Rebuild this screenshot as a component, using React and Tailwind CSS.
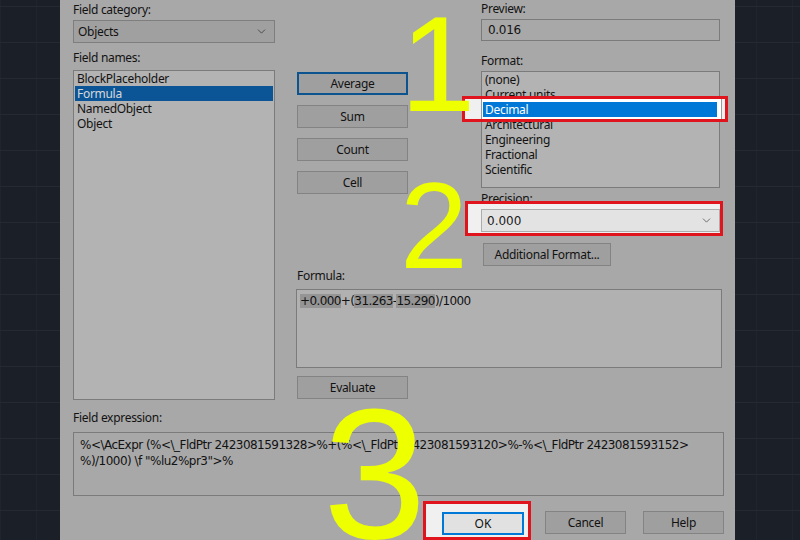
import { ChevronDown } from 'lucide-react';

const fieldNames = ['BlockPlaceholder', 'Formula', 'NamedObject', 'Object'];
const formats = ['(none)', 'Current units', 'Decimal', 'Architectural', 'Engineering', 'Fractional', 'Scientific'];

function Label({ children, className = '' }) {
  return <div className={`h-[14px] leading-[14px] text-[12px] text-[#121212] ${className}`}>{children}</div>;
}

function Button({ children, className = '', focused = false }) {
  return (
    <div
      className={`h-[23px] flex items-center justify-center text-[12px] text-[#121212] bg-[#9f9f9f] border ${
        focused ? 'border-[#0b5490] border-2' : 'border-[#838383]'
      } ${className}`}
    >
      {children}
    </div>
  );
}

function Combo({ value, className = '' }) {
  return (
    <div className={`h-[23px] flex items-center justify-between pl-[4px] pr-[6px] bg-[#a0a0a0] border border-[#7e7e7e] text-[12px] text-[#121212] ${className}`}>
      <span>{value}</span>
      <ChevronDown size={13} strokeWidth={1.5} className="text-[#3a3a3a]" />
    </div>
  );
}

function ListBox({ items, selected, className = '' }) {
  return (
    <div className={`bg-[#b3b3b3] border border-[#7b7b7b] px-[1px] ${className}`}>
      {items.map((item) => (
        <div
          key={item}
          className={`h-[15px] leading-[15px] pl-[2px] text-[12px] ${
            item === selected ? 'bg-[#0b5597] text-[#d8d8d8]' : 'text-[#121212]'
          }`}
        >
          {item}
        </div>
      ))}
    </div>
  );
}

function Dialog() {
  return (
    <div className="w-[675px] h-full shrink-0 bg-[#a8a8a8] pl-[13px] font-['Noto_Sans',sans-serif] tracking-[-0.3px]">
      <div className="flex">
        {/* left column: category + field names */}
        <div className="w-[202px] shrink-0">
          <Label className="mt-[3px]">Field category:</Label>
          <Combo value="Objects" className="mt-[3px]" />
          <Label className="mt-[8px]">Field names:</Label>
          <ListBox items={fieldNames} selected="Formula" className="mt-[5px] h-[330px]" />
        </div>

        <div className="ml-[21px] w-[428px] shrink-0">
          <div className="flex">
            <div className="w-[111px] ml-[1px] pt-[72px] flex flex-col gap-[10px]">
              <Button focused>Average</Button>
              <Button>Sum</Button>
              <Button>Count</Button>
              <Button>Cell</Button>
            </div>

            <div className="ml-[73px] w-[239px]">
              <Label className="mt-[2px]">Preview:</Label>
              <div className="mt-[3px] h-[22px] flex items-center pl-[6px] bg-[#a8a8a8] border border-[#7b7b7b] text-[12px] text-[#121212] font-['DejaVu_Sans',sans-serif]">
                0.016
              </div>
              <Label className="mt-[13px]">Format:</Label>
              <ListBox items={formats} className="mt-[3px] h-[117px]" />
              <Label className="mt-[4px]">Precision:</Label>
              <Combo value="0.000" className="mt-[3px]" />
              <Button className="mt-[11px] ml-[2px] w-[128px]">Additional Format...</Button>
            </div>
          </div>

          <Label className="mt-[3px] ml-[1px]">Formula:</Label>
          <div className="mt-[6px] h-[79px] w-[426px] bg-[#b1b1b1] border border-[#7b7b7b] pl-[3px] pt-[3px] text-[12px] leading-[16px] text-[#121212] font-['DejaVu_Sans',sans-serif] tracking-[-0.6px]">
            <span className="bg-[#959595]">+0.000</span>+(<span className="bg-[#959595]">31.263</span>-
            <span className="bg-[#959595]">15.290</span>)/1000
          </div>
          <Button className="mt-[8px] ml-[1px] w-[111px]">Evaluate</Button>
        </div>
      </div>

      <Label className="mt-[11px]">Field expression:</Label>
      <div className="mt-[7px] h-[64px] w-[651px] bg-[#a8a8a8] border border-[#7b7b7b] pl-[6px] pt-[4px] text-[12px] leading-[16px] text-[#121212] font-['DejaVu_Sans',sans-serif] tracking-[-0.52px] whitespace-pre">
        {'%<\\AcExpr (%<\\_FldPtr 2423081591328>%+(%<\\_FldPtr 2423081593120>%-%<\\_FldPtr 2423081593152>'}
        <br />
        {'%)/1000) \\f "%lu2%pr3">%'}
      </div>

      <div className="mt-[15px] flex">
        <Button className="ml-[370px] w-[81px]">OK</Button>
        <Button className="ml-[21px] w-[81px]">Cancel</Button>
        <Button className="ml-[17px] w-[81px]">Help</Button>
      </div>
    </div>
  );
}

export default function App() {
  return (
    <div className="relative w-[800px] h-[540px] overflow-hidden flex bg-[#1b1f27] bg-[linear-gradient(#242932_1px,transparent_1px),linear-gradient(90deg,#20242c_1px,transparent_1px)] bg-size-[36px_36px] bg-position-[0_6px]">
      <div className="w-[60px] shrink-0" />
      <Dialog />

      {/* callout 1: Decimal format */}
      <div className="absolute left-[462px] top-[96px] w-[266px] h-[26px] border-[3px] border-[#e0141c] bg-[#f0f0f0] font-['Noto_Sans',sans-serif] tracking-[-0.3px]">
        <div className="absolute left-[16px] top-0 w-[241px] h-full bg-white border-x border-[#9a9a9a]" />
        <div className="absolute left-[18px] top-[3px] w-[234px] h-[15px] leading-[15px] pl-[2px] bg-[#0078d7] text-white text-[12px]">
          Decimal
        </div>
      </div>

      {/* callout 2: precision */}
      <div className="absolute left-[465px] top-[201px] w-[258px] h-[35px] border-[3px] border-[#e0141c] bg-[#f0f0f0] font-['Noto_Sans',sans-serif]">
        <div className="absolute left-[13px] top-[5px] w-[239px] h-[23px] flex items-center justify-between pl-[5px] pr-[6px] bg-[#e3e3e3] border border-[#adadad] text-[12px] text-[#1a1a1a] font-['DejaVu_Sans',sans-serif]">
          <span>0.000</span>
          <ChevronDown size={13} strokeWidth={1.5} className="text-[#555]" />
        </div>
      </div>

      {/* callout 3: OK button */}
      <div className="absolute left-[423px] top-[501px] w-[108px] h-[39px] border-[3px] border-[#e0141c] bg-[#f0f0f0] font-['Noto_Sans',sans-serif]">
        <div className="absolute left-[16px] top-[8px] w-[82px] h-[23px] flex items-center justify-center bg-[#e1e1e1] border-2 border-[#0078d7] text-[12px] text-[#111]">
          OK
        </div>
      </div>

      {/* step numbers */}
      <div className="absolute left-[400px] top-[-4px] text-[136px] leading-none text-[#eeff00] font-['Liberation_Sans',sans-serif]">1</div>
      <div className="absolute left-[400px] top-[165px] text-[122px] leading-none text-[#eeff00] font-['Liberation_Sans',sans-serif]">2</div>
      <div className="absolute left-[323px] top-[381px] text-[186px] leading-none text-[#eeff00] font-['Liberation_Sans',sans-serif]">3</div>
    </div>
  );
}
